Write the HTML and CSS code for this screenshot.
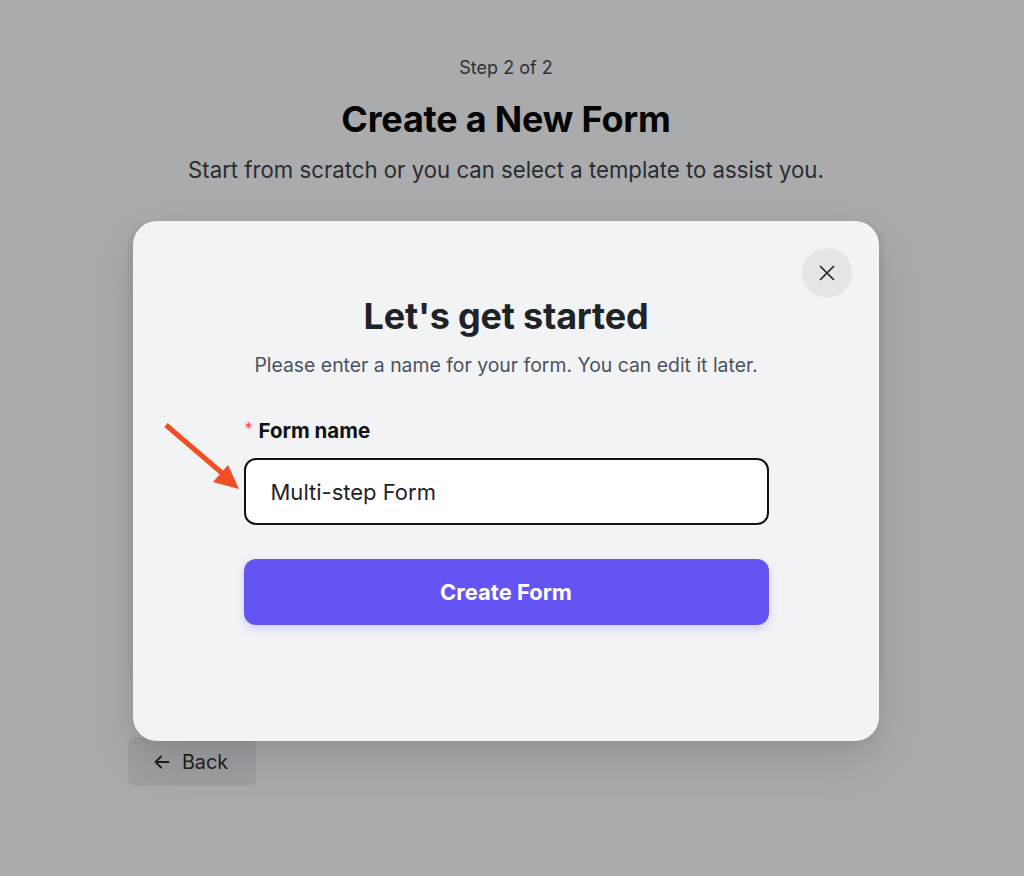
FILE: index.html
```html
<!DOCTYPE html>
<html lang="en">
<head>
<meta charset="utf-8">
<title>Create a New Form</title>
<link rel="stylesheet" href="styles.css">
</head>
<body>
<div class="page">
  <p class="step">Step 2 of 2</p>
  <h1 class="page-title">Create a New Form</h1>
  <p class="page-sub">Start from scratch or you can select a template to assist you.</p>
  <div class="behind-card"></div>
  <button class="back-btn" type="button">
    <svg class="back-icon" viewBox="0 0 20 20" width="20" height="20" fill="none" stroke="#1d1e22" stroke-width="1.8" stroke-linecap="round" stroke-linejoin="round"><path d="M16.5 10H3.5M9 4.5L3.5 10 9 15.5"/></svg>
    <span>Back</span>
  </button>
</div>

<div class="modal-layer">
  <div class="modal">
    <button class="close-btn" type="button" aria-label="Close">
      <svg viewBox="0 0 20 20" width="20" height="20" fill="none" stroke="#1f2328" stroke-width="1.7" stroke-linecap="round"><path d="M3.5 3.5L16.5 16.5M16.5 3.5L3.5 16.5"/></svg>
    </button>
    <h2 class="modal-title">Let's get started</h2>
    <p class="modal-sub">Please enter a name for your form. You can edit it later.</p>
    <div class="form">
      <label class="label"><span class="req">*</span>Form name</label>
      <div class="input-wrap">
        <svg class="pointer" viewBox="0 0 80 70" width="80" height="70"><path d="M4 4L60 52" stroke="#f24e26" stroke-width="5" stroke-linecap="butt"/><path d="M77 68L51 61 66 44Z" fill="#f24e26"/></svg>
        <div class="input">Multi-step Form</div>
      </div>
      <button class="create-btn" type="button">Create Form</button>
    </div>
  </div>
</div>
</body>
</html>
```
FILE: styles.css
```css
* { box-sizing: border-box; }
html, body { margin: 0; padding: 0; }
body {
  background: #aaabad;
  font-family: Inter, "Noto Sans", sans-serif;
  width: 1024px;
  height: 876px;
  overflow: hidden;
  position: relative;
}
.page {
  width: 756px;
  margin-left: 128px;
  padding-top: 56px;
  display: flex;
  flex-direction: column;
  align-items: center;
}
.step {
  margin: 0;
  font-size: 18px;
  line-height: 24px;
  color: #2e3035;
}
.page-title {
  margin: 17px 0 0;
  font-size: 36px;
  line-height: 44px;
  font-weight: 700;
  color: #050506;
  letter-spacing: -0.2px;
}
.page-sub {
  margin: 15px 0 0;
  font-size: 22.2px;
  line-height: 28px;
  color: #2a2c30;
}
.behind-card {
  margin-top: 38px;
  width: 756px;
  height: 468px;
  border-radius: 24px;
  background: #a4a5a7;
}
.back-btn {
  align-self: flex-start;
  margin-top: 47px;
  width: 128px;
  height: 49px;
  border: 0;
  border-radius: 8px;
  background: #9e9fa2;
  display: flex;
  align-items: center;
  justify-content: center;
  gap: 10px;
  font-family: inherit;
  font-size: 19.8px;
  color: #1d1e22;
  padding: 0 4px 0 0;
}
.modal-layer {
  position: absolute;
  left: 133px;
  top: 221px;
}
.modal {
  position: relative;
  width: 746px;
  height: 520px;
  border-radius: 24px;
  background: #f2f3f5;
  box-shadow: 0 20px 50px rgba(0,0,0,0.12), 0 4px 14px rgba(0,0,0,0.06);
  display: flex;
  flex-direction: column;
  align-items: center;
  padding-top: 73px;
}
.close-btn {
  position: absolute;
  top: 27px;
  right: 27px;
  width: 50px;
  height: 50px;
  border-radius: 50%;
  border: 0;
  background: #e5e5e6;
  display: flex;
  align-items: center;
  justify-content: center;
  padding: 0;
}
.modal-title {
  margin: 0;
  font-size: 36px;
  line-height: 44px;
  font-weight: 700;
  color: #1f2328;
  letter-spacing: -0.2px;
}
.modal-sub {
  margin: 14px 0 0;
  font-size: 19.4px;
  line-height: 26px;
  color: #4b525c;
}
.form {
  width: 525px;
  margin-top: 40px;
  display: flex;
  flex-direction: column;
}
.label {
  font-size: 20.5px;
  line-height: 26px;
  font-weight: 700;
  color: #111214;
  display: flex;
  align-items: center;
}
.req {
  color: #f24b4b;
  font-weight: 400;
  font-size: 16px;
  margin-right: 6px;
  margin-left: 1px;
  position: relative;
  top: -3px;
}
.input-wrap {
  position: relative;
  margin-top: 14px;
}
.pointer {
  position: absolute;
  left: -82px;
  top: -37px;
}
.input {
  height: 67px;
  border: 2.5px solid #111214;
  border-radius: 12px;
  background: #ffffff;
  padding-left: 25px;
  display: flex;
  align-items: center;
  font-size: 22px;
  color: #1f2328;
}
.create-btn {
  margin-top: 34px;
  height: 66px;
  border: 0;
  border-radius: 12px;
  background: #6554f4;
  color: #ffffff;
  font-family: inherit;
  font-size: 22px;
  font-weight: 700;
  box-shadow: 0 4px 10px rgba(101,84,244,0.22);
}
```
